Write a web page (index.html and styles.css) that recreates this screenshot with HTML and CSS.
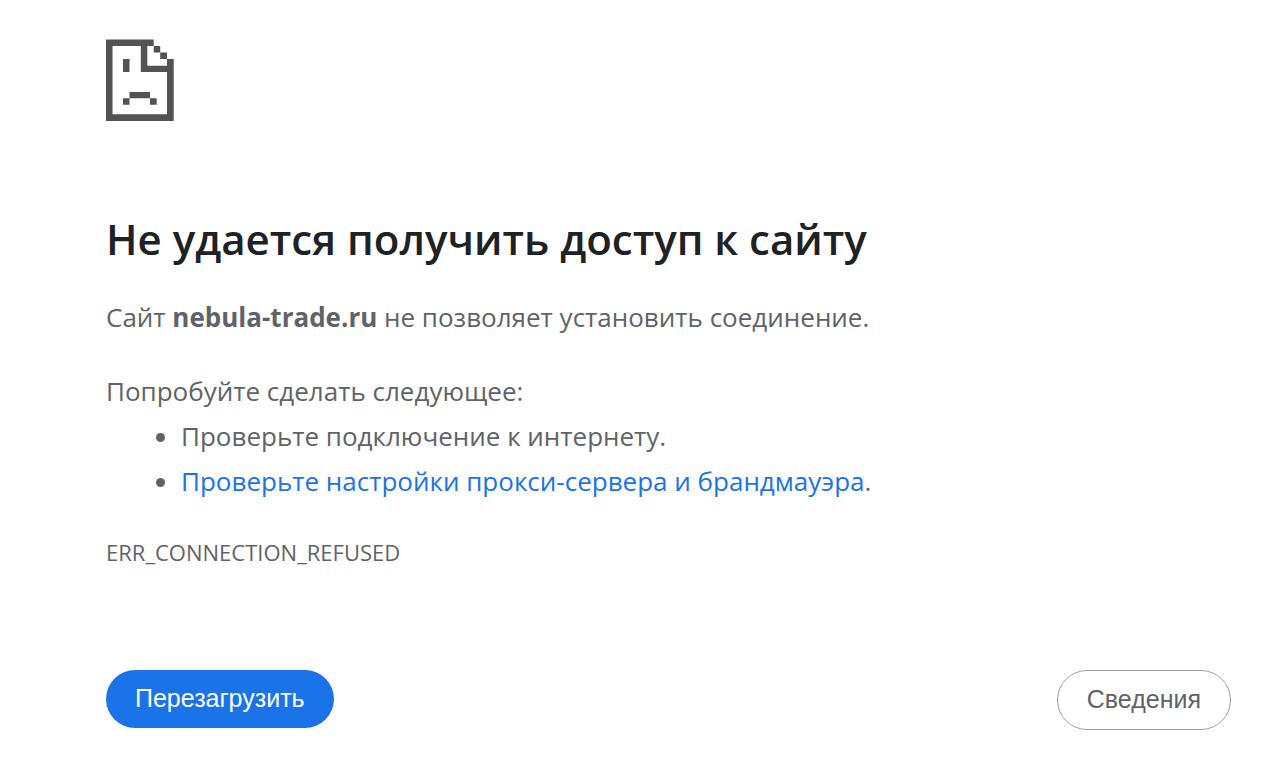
FILE: index.html
```html
<!DOCTYPE html>
<html lang="ru">
<head>
    <meta charset="UTF-8">
    <meta name="viewport" content="width=device-width, initial-scale=1.0">
    <title>nebula-trade.ru</title>
    <link rel="stylesheet" href="styles.css">
</head>
<body>
    <main class="error-page">
        <svg class="icon" viewBox="0 0 68 82" aria-hidden="true">
            <!-- page outline and folded corner -->
            <path d="M0 .5H47.7V7H41.3V26.8H61V20H67.7V82H0ZM6.5 7V75.2H61V33H34.8V7Z" fill-rule="evenodd"/>
            <path d="M47.7 7H54.2V13.5H47.7ZM54.2 13.5H61V20H54.2Z"/>
            <!-- face -->
            <path d="M17 20H23.5V33H17ZM23.5 53H44V59.3H23.5ZM17 59.3H23.5V65.8H17ZM44 59.3H50.7V65.8H44Z"/>
        </svg>
        <h1>Не удается получить доступ к сайту</h1>
        <p>Сайт <strong>nebula-trade.ru</strong> не позволяет установить соединение.</p>
        <div class="suggestions">
            <p>Попробуйте сделать следующее:</p>
            <ul>
                <li>Проверьте подключение к интернету.</li>
                <li><a href="#buttons">Проверьте настройки прокси-сервера и брандмауэра</a>.</li>
            </ul>
        </div>
        <div class="error-code">ERR_CONNECTION_REFUSED</div>
        <div class="buttons" id="buttons">
            <button class="reload" type="button">Перезагрузить</button>
            <button class="details" type="button">Сведения</button>
        </div>
    </main>
</body>
</html>
```
FILE: styles.css
```css
body {
    margin: 0;
    background: #fff;
    color: #5f6368;
    font-family: "Segoe UI", "Open Sans", "Noto Sans", sans-serif;
    font-size: 26px;
    line-height: 45px;
}
.error-page {
    padding: 39px 48px 40px 106px;
}
.icon {
    display: block;
    width: 68px;
    height: 82px;
    fill: #535353;
}
h1 {
    margin: 90px 0 28px;
    color: #202124;
    font-size: 42px;
    font-weight: 600;
    line-height: 56px;
}
p {
    margin: 0;
}
.suggestions {
    margin-top: 29px;
}
ul {
    margin: 0;
    padding-left: 75px;
}
a {
    color: #1a73e8;
    text-decoration: none;
}
.error-code {
    margin-top: 26px;
    font-size: 22px;
}
.buttons {
    display: flex;
    flex-wrap: wrap;
    justify-content: space-between;
    align-items: flex-start;
    gap: 16px;
    margin-top: 95px;
}
button {
    padding: 13px 29px 15px;
    border: none;
    border-radius: 30px;
    font-family: Arial, "Liberation Sans", sans-serif;
    font-size: 25px;
    line-height: 30px;
    cursor: pointer;
}
.reload {
    background: #1a73e8;
    color: #fff;
}
.details {
    border: 1px solid #9aa0a6;
    background: #fff;
    color: #5f6368;
}
```
